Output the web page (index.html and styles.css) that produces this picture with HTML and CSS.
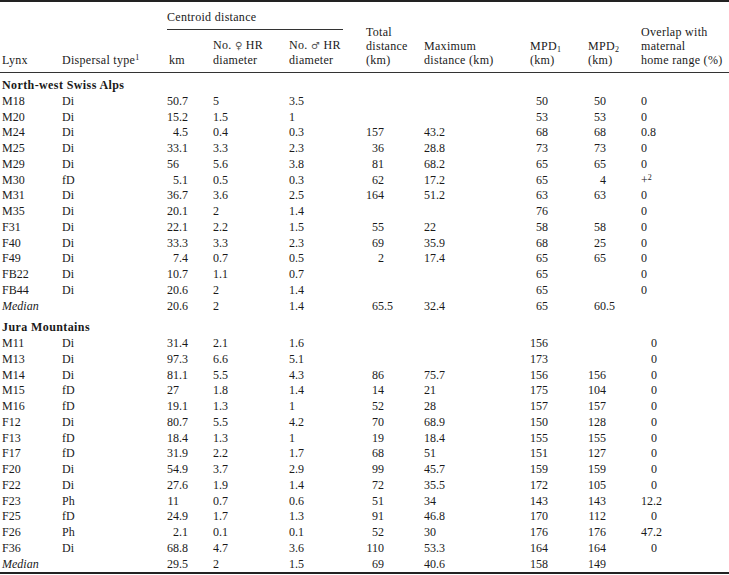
FILE: index.html
```html
<!DOCTYPE html>
<html>
<head>
<meta charset="utf-8">
<link rel="stylesheet" href="styles.css">
</head>
<body>
<table class="tbl">
<colgroup>
<col class="c-lynx"><col class="c-type"><col class="c-km"><col class="c-fem"><col class="c-mal"><col class="c-tot"><col class="c-max"><col class="c-mpd1"><col class="c-mpd2"><col class="c-ovl">
</colgroup>
<thead>
<tr class="h1">
<th rowspan="2">Lynx</th>
<th rowspan="2">Dispersal type<sup>1</sup></th>
<th colspan="3" class="grp"><div class="grp-label">Centroid distance</div></th>
<th rowspan="2">Total<br>distance<br>(km)</th>
<th rowspan="2">Maximum<br>distance (km)</th>
<th rowspan="2">MPD<sub>1</sub><br>(km)</th>
<th rowspan="2">MPD<sub>2</sub><br>(km)</th>
<th rowspan="2">Overlap with<br>maternal<br>home range (%)</th>
</tr>
<tr class="h2">
<th>km</th>
<th>No. <span class="sym">♀</span> HR<br>diameter</th>
<th>No. <span class="sym">♂</span> HR<br>diameter</th>
</tr>
</thead>
<tbody class="sec first">
<tr class="title"><td colspan="10">North-west Swiss Alps</td></tr>
<tr><td>M18</td><td>Di</td><td><span class="i2">50</span>.7</td><td><span class="i1">5</span></td><td><span class="i1">3</span>.5</td><td></td><td></td><td><span class="i3">50</span></td><td><span class="i3">50</span></td><td><span class="i1">0</span></td></tr>
<tr><td>M20</td><td>Di</td><td><span class="i2">15</span>.2</td><td><span class="i1">1</span>.5</td><td><span class="i1">1</span></td><td></td><td></td><td><span class="i3">53</span></td><td><span class="i3">53</span></td><td><span class="i1">0</span></td></tr>
<tr><td>M24</td><td>Di</td><td><span class="i2">4</span>.5</td><td><span class="i1">0</span>.4</td><td><span class="i1">0</span>.3</td><td><span class="i3">157</span></td><td><span class="i2">43</span>.2</td><td><span class="i3">68</span></td><td><span class="i3">68</span></td><td><span class="i1">0</span>.8</td></tr>
<tr><td>M25</td><td>Di</td><td><span class="i2">33</span>.1</td><td><span class="i1">3</span>.3</td><td><span class="i1">2</span>.3</td><td><span class="i3">36</span></td><td><span class="i2">28</span>.8</td><td><span class="i3">73</span></td><td><span class="i3">73</span></td><td><span class="i1">0</span></td></tr>
<tr><td>M29</td><td>Di</td><td><span class="i2">56</span></td><td><span class="i1">5</span>.6</td><td><span class="i1">3</span>.8</td><td><span class="i3">81</span></td><td><span class="i2">68</span>.2</td><td><span class="i3">65</span></td><td><span class="i3">65</span></td><td><span class="i1">0</span></td></tr>
<tr><td>M30</td><td>fD</td><td><span class="i2">5</span>.1</td><td><span class="i1">0</span>.5</td><td><span class="i1">0</span>.3</td><td><span class="i3">62</span></td><td><span class="i2">17</span>.2</td><td><span class="i3">65</span></td><td><span class="i3">4</span></td><td>+<sup>2</sup></td></tr>
<tr><td>M31</td><td>Di</td><td><span class="i2">36</span>.7</td><td><span class="i1">3</span>.6</td><td><span class="i1">2</span>.5</td><td><span class="i3">164</span></td><td><span class="i2">51</span>.2</td><td><span class="i3">63</span></td><td><span class="i3">63</span></td><td><span class="i1">0</span></td></tr>
<tr><td>M35</td><td>Di</td><td><span class="i2">20</span>.1</td><td><span class="i1">2</span></td><td><span class="i1">1</span>.4</td><td></td><td></td><td><span class="i3">76</span></td><td></td><td><span class="i1">0</span></td></tr>
<tr><td>F31</td><td>Di</td><td><span class="i2">22</span>.1</td><td><span class="i1">2</span>.2</td><td><span class="i1">1</span>.5</td><td><span class="i3">55</span></td><td><span class="i2">22</span></td><td><span class="i3">58</span></td><td><span class="i3">58</span></td><td><span class="i1">0</span></td></tr>
<tr><td>F40</td><td>Di</td><td><span class="i2">33</span>.3</td><td><span class="i1">3</span>.3</td><td><span class="i1">2</span>.3</td><td><span class="i3">69</span></td><td><span class="i2">35</span>.9</td><td><span class="i3">68</span></td><td><span class="i3">25</span></td><td><span class="i1">0</span></td></tr>
<tr><td>F49</td><td>Di</td><td><span class="i2">7</span>.4</td><td><span class="i1">0</span>.7</td><td><span class="i1">0</span>.5</td><td><span class="i3">2</span></td><td><span class="i2">17</span>.4</td><td><span class="i3">65</span></td><td><span class="i3">65</span></td><td><span class="i1">0</span></td></tr>
<tr><td>FB22</td><td>Di</td><td><span class="i2">10</span>.7</td><td><span class="i1">1</span>.1</td><td><span class="i1">0</span>.7</td><td></td><td></td><td><span class="i3">65</span></td><td></td><td><span class="i1">0</span></td></tr>
<tr><td>FB44</td><td>Di</td><td><span class="i2">20</span>.6</td><td><span class="i1">2</span></td><td><span class="i1">1</span>.4</td><td></td><td></td><td><span class="i3">65</span></td><td></td><td><span class="i1">0</span></td></tr>
<tr class="median"><td class="it">Median</td><td></td><td><span class="i2">20</span>.6</td><td><span class="i1">2</span></td><td><span class="i1">1</span>.4</td><td><span class="i3">65</span>.5</td><td><span class="i2">32</span>.4</td><td><span class="i3">65</span></td><td><span class="i3">60</span>.5</td><td></td></tr>
</tbody>
<tbody class="sec last">
<tr class="title"><td colspan="10">Jura Mountains</td></tr>
<tr><td>M11</td><td>Di</td><td><span class="i2">31</span>.4</td><td><span class="i1">2</span>.1</td><td><span class="i1">1</span>.6</td><td></td><td></td><td><span class="i3">156</span></td><td></td><td><span class="z">0</span></td></tr>
<tr><td>M13</td><td>Di</td><td><span class="i2">97</span>.3</td><td><span class="i1">6</span>.6</td><td><span class="i1">5</span>.1</td><td></td><td></td><td><span class="i3">173</span></td><td></td><td><span class="z">0</span></td></tr>
<tr><td>M14</td><td>Di</td><td><span class="i2">81</span>.1</td><td><span class="i1">5</span>.5</td><td><span class="i1">4</span>.3</td><td><span class="i3">86</span></td><td><span class="i2">75</span>.7</td><td><span class="i3">156</span></td><td><span class="i3">156</span></td><td><span class="z">0</span></td></tr>
<tr><td>M15</td><td>fD</td><td><span class="i2">27</span></td><td><span class="i1">1</span>.8</td><td><span class="i1">1</span>.4</td><td><span class="i3">14</span></td><td><span class="i2">21</span></td><td><span class="i3">175</span></td><td><span class="i3">104</span></td><td><span class="z">0</span></td></tr>
<tr><td>M16</td><td>fD</td><td><span class="i2">19</span>.1</td><td><span class="i1">1</span>.3</td><td><span class="i1">1</span></td><td><span class="i3">52</span></td><td><span class="i2">28</span></td><td><span class="i3">157</span></td><td><span class="i3">157</span></td><td><span class="z">0</span></td></tr>
<tr><td>F12</td><td>Di</td><td><span class="i2">80</span>.7</td><td><span class="i1">5</span>.5</td><td><span class="i1">4</span>.2</td><td><span class="i3">70</span></td><td><span class="i2">68</span>.9</td><td><span class="i3">150</span></td><td><span class="i3">128</span></td><td><span class="z">0</span></td></tr>
<tr><td>F13</td><td>fD</td><td><span class="i2">18</span>.4</td><td><span class="i1">1</span>.3</td><td><span class="i1">1</span></td><td><span class="i3">19</span></td><td><span class="i2">18</span>.4</td><td><span class="i3">155</span></td><td><span class="i3">155</span></td><td><span class="z">0</span></td></tr>
<tr><td>F17</td><td>fD</td><td><span class="i2">31</span>.9</td><td><span class="i1">2</span>.2</td><td><span class="i1">1</span>.7</td><td><span class="i3">68</span></td><td><span class="i2">51</span></td><td><span class="i3">151</span></td><td><span class="i3">127</span></td><td><span class="z">0</span></td></tr>
<tr><td>F20</td><td>Di</td><td><span class="i2">54</span>.9</td><td><span class="i1">3</span>.7</td><td><span class="i1">2</span>.9</td><td><span class="i3">99</span></td><td><span class="i2">45</span>.7</td><td><span class="i3">159</span></td><td><span class="i3">159</span></td><td><span class="z">0</span></td></tr>
<tr><td>F22</td><td>Di</td><td><span class="i2">27</span>.6</td><td><span class="i1">1</span>.9</td><td><span class="i1">1</span>.4</td><td><span class="i3">72</span></td><td><span class="i2">35</span>.5</td><td><span class="i3">172</span></td><td><span class="i3">105</span></td><td><span class="z">0</span></td></tr>
<tr><td>F23</td><td>Ph</td><td><span class="i2">11</span></td><td><span class="i1">0</span>.7</td><td><span class="i1">0</span>.6</td><td><span class="i3">51</span></td><td><span class="i2">34</span></td><td><span class="i3">143</span></td><td><span class="i3">143</span></td><td><span class="i2">12</span>.2</td></tr>
<tr><td>F25</td><td>fD</td><td><span class="i2">24</span>.9</td><td><span class="i1">1</span>.7</td><td><span class="i1">1</span>.3</td><td><span class="i3">91</span></td><td><span class="i2">46</span>.8</td><td><span class="i3">170</span></td><td><span class="i3">112</span></td><td><span class="z">0</span></td></tr>
<tr><td>F26</td><td>Ph</td><td><span class="i2">2</span>.1</td><td><span class="i1">0</span>.1</td><td><span class="i1">0</span>.1</td><td><span class="i3">52</span></td><td><span class="i2">30</span></td><td><span class="i3">176</span></td><td><span class="i3">176</span></td><td><span class="i2">47</span>.2</td></tr>
<tr><td>F36</td><td>Di</td><td><span class="i2">68</span>.8</td><td><span class="i1">4</span>.7</td><td><span class="i1">3</span>.6</td><td><span class="i3">110</span></td><td><span class="i2">53</span>.3</td><td><span class="i3">164</span></td><td><span class="i3">164</span></td><td><span class="z">0</span></td></tr>
<tr class="median"><td class="it">Median</td><td></td><td><span class="i2">29</span>.5</td><td><span class="i1">2</span></td><td><span class="i1">1</span>.5</td><td><span class="i3">69</span></td><td><span class="i2">40</span>.6</td><td><span class="i3">158</span></td><td><span class="i3">149</span></td><td></td></tr>
</tbody>
</table>
</body>
</html>
```
FILE: styles.css
```css
html, body {
  margin: 0;
  padding: 0;
  background: #ffffff;
}
body {
  font-family: "Liberation Serif", "DejaVu Serif", serif;
  font-size: 12px;
  color: #1a1a1a;
}
.tbl {
  width: 729px;
  table-layout: fixed;
  border-collapse: collapse;
  border-top: 2px solid #222;
  border-bottom: 2px solid #222;
}
.c-lynx { width: 62px; }
.c-type { width: 105px; }
.c-km { width: 46px; }
.c-fem { width: 76px; }
.c-mal { width: 77px; }
.c-tot { width: 58px; }
.c-max { width: 106px; }
.c-mpd1 { width: 58px; }
.c-mpd2 { width: 53px; }
.c-ovl { width: 88px; }
th {
  font-weight: normal;
  text-align: left;
  vertical-align: bottom;
  padding: 0;
  line-height: 14px;
  white-space: nowrap;
  letter-spacing: 0.3px;
}
thead {
  border-bottom: 1px solid #333;
}
.h1 th.grp {
  padding-top: 8px;
  vertical-align: top;
}
.grp-label {
  margin-right: 23px;
  padding-bottom: 5px;
  border-bottom: 1px solid #333;
}
.h2 th {
  padding-top: 8px;
}
thead tr > th[rowspan],
.h2 th {
  padding-bottom: 5px;
}
th:first-child, td:first-child {
  padding-left: 2px;
}
td {
  padding: 0;
  line-height: 15.75px;
  white-space: nowrap;
  vertical-align: middle;
}
sup {
  font-size: 8px;
  line-height: 0;
  vertical-align: 4px;
  letter-spacing: 0;
}
sub {
  font-size: 8px;
  line-height: 0;
  vertical-align: -2px;
  letter-spacing: 0;
}
.sym {
  font-family: "DejaVu Sans", sans-serif;
  font-size: 10px;
  color: #555;
}
.title td {
  font-weight: bold;
  letter-spacing: 0.4px;
  padding-top: 5px;
}
.sec.last .title td {
  padding-top: 6px;
}
.it {
  font-style: italic;
}
.i1, .i2, .i3 {
  display: inline-block;
  text-align: right;
}
.i1 { width: 0.5em; }
.i2 { width: 1em; }
.i3 { width: 1.5em; }
.z {
  display: inline-block;
  padding-left: 10px;
}
```
